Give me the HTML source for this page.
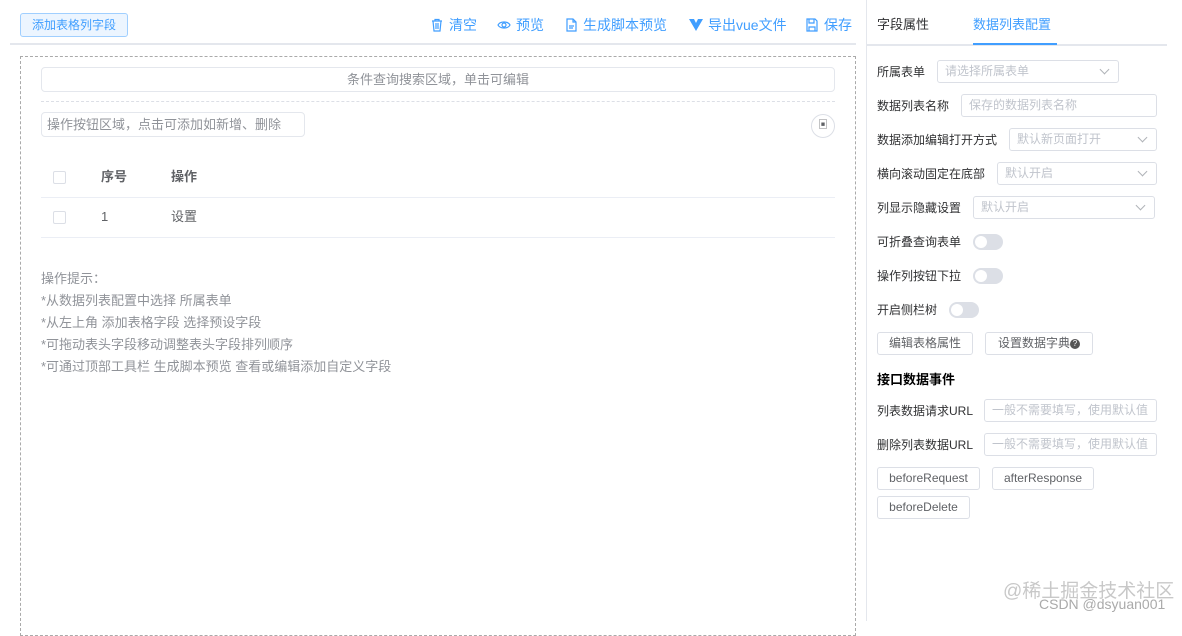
<!DOCTYPE html><html><head><meta charset="utf-8"><style>
*{box-sizing:border-box;margin:0;padding:0}
body{width:1182px;height:621px;background:#fff;font-family:"Liberation Sans","Noto Sans CJK SC",sans-serif;font-size:12px;color:#606266;position:relative;overflow:hidden}
.a{position:absolute;white-space:nowrap}
.lbl{position:absolute;left:877px;font-size:12px;color:#303133;line-height:22px;white-space:nowrap}
.inp{position:absolute;height:23px;border:1px solid #dcdfe6;border-radius:3px;color:#c0c4cc;font-size:12px;line-height:21px;padding-left:7px;white-space:nowrap}
.inp.sel::after{content:"";position:absolute;right:10px;top:5px;width:6px;height:6px;border-right:1px solid #b0b3b8;border-bottom:1px solid #b0b3b8;transform:rotate(45deg)}
.sw{position:absolute;width:30px;height:16px;border-radius:8px;background:#dcdfe6}
.sw::after{content:"";position:absolute;left:2px;top:2px;width:12px;height:12px;border-radius:6px;background:#fff}
.btn{position:absolute;height:23px;border:1px solid #dcdfe6;border-radius:3px;color:#606266;font-size:12px;line-height:21px;text-align:center;background:#fff}
.tb{position:absolute;top:15px;color:#409eff;font-size:14px;line-height:20px;white-space:nowrap;display:flex;align-items:center;gap:5px}
.tb svg{width:14px;height:14px}
.hint{position:absolute;left:41px;color:#909399;font-size:13px;line-height:22px}
</style></head><body>
<div class="a" style="left:20px;top:13px;width:108px;height:24px;border:1px solid #a0cfff;background:#ecf5ff;border-radius:3px;color:#409eff;font-size:12px;line-height:22px;text-align:center">添加表格列字段</div>
<div class="tb" style="left:430px"><svg viewBox="0 0 14 14" fill="none" stroke="#409eff" stroke-width="1.2"><path d="M2 3h10M5 3V1.5h4V3M3 3l1 10h6l1-10M6 5v6M8 5v6"/></svg>清空</div>
<div class="tb" style="left:497px"><svg viewBox="0 0 14 14" fill="none" stroke="#409eff" stroke-width="1.2"><path d="M1 7c2-4 10-4 12 0c-2 4-10 4-12 0z"/><circle cx="7" cy="7" r="2"/></svg>预览</div>
<div class="tb" style="left:564px"><svg viewBox="0 0 14 14" fill="none" stroke="#409eff" stroke-width="1.2"><path d="M3 1h6l3 3v9H3zM9 1v3h3M5 8h5M5 10h4"/></svg>生成脚本预览</div>
<div class="tb" style="left:689px"><svg viewBox="0 0 14 14"><path d="M0 1h5l2 4 2-4h5L7 13z" fill="#409eff"/></svg>导出vue文件</div>
<div class="tb" style="left:805px"><svg viewBox="0 0 14 14" fill="none" stroke="#409eff" stroke-width="1.2"><path d="M2 1h8l2 2v10H2zM4 1v4h5V1M4 13V9h6v4"/></svg>保存</div>
<div class="a" style="left:10px;top:43px;width:846px;height:2px;background:#e4e7ed"></div>
<div class="a" style="left:866px;top:0;width:1px;height:621px;background:#e4e7ed"></div>
<div class="a" style="left:20px;top:56px;width:836px;height:580px;border:1px dashed #aaa"></div>
<div class="a" style="left:41px;top:67px;width:794px;height:25px;border:1px solid #e4e7ed;border-radius:4px;text-align:center;line-height:23px;font-size:13px;color:#909399">条件查询搜索区域，单击可编辑</div>
<div class="a" style="left:41px;top:101px;width:794px;border-top:1px dashed #dcdfe6"></div>
<div class="a" style="left:41px;top:112px;width:264px;height:25px;border:1px solid #e4e7ed;border-radius:4px;line-height:23px;font-size:13px;color:#909399;padding-left:5px">操作按钮区域，点击可添加如新增、删除</div>
<div class="a" style="left:811px;top:114px;width:24px;height:24px;border:1px solid #dcdfe6;border-radius:12px;text-align:center;line-height:22px;font-size:10px;color:#606266">▣</div>
<div class="a" style="left:53px;top:171px;width:13px;height:13px;border:1px solid #dcdfe6;border-radius:2px"></div>
<div class="a" style="left:101px;top:168px;font-weight:bold;font-size:13px;color:#606266;line-height:18px">序号</div>
<div class="a" style="left:171px;top:168px;font-weight:bold;font-size:13px;color:#606266;line-height:18px">操作</div>
<div class="a" style="left:41px;top:197px;width:794px;height:1px;background:#ebeef5"></div>
<div class="a" style="left:53px;top:211px;width:13px;height:13px;border:1px solid #dcdfe6;border-radius:2px"></div>
<div class="a" style="left:101px;top:208px;font-size:13px;line-height:18px">1</div>
<div class="a" style="left:171px;top:208px;font-size:13px;line-height:18px">设置</div>
<div class="a" style="left:41px;top:237px;width:794px;height:1px;background:#ebeef5"></div>
<div class="hint" style="top:268px">操作提示：</div>
<div class="hint" style="top:290px">*从数据列表配置中选择 所属表单</div>
<div class="hint" style="top:312px">*从左上角 添加表格字段 选择预设字段</div>
<div class="hint" style="top:334px">*可拖动表头字段移动调整表头字段排列顺序</div>
<div class="hint" style="top:356px">*可通过顶部工具栏 生成脚本预览 查看或编辑添加自定义字段</div>
<div class="a" style="left:877px;top:16px;font-size:13px;color:#303133;line-height:18px">字段属性</div>
<div class="a" style="left:973px;top:16px;font-size:13px;color:#409eff;line-height:18px">数据列表配置</div>
<div class="a" style="left:867px;top:44px;width:300px;height:2px;background:#e4e7ed"></div>
<div class="a" style="left:973px;top:43px;width:84px;height:2px;background:#409eff"></div>
<div class="lbl" style="top:61px">所属表单</div><div class="inp sel" style="left:937px;top:60px;width:182px">请选择所属表单</div>
<div class="lbl" style="top:95px">数据列表名称</div><div class="inp" style="left:961px;top:94px;width:196px">保存的数据列表名称</div>
<div class="lbl" style="top:129px">数据添加编辑打开方式</div><div class="inp sel" style="left:1009px;top:128px;width:148px">默认新页面打开</div>
<div class="lbl" style="top:163px">横向滚动固定在底部</div><div class="inp sel" style="left:997px;top:162px;width:160px">默认开启</div>
<div class="lbl" style="top:197px">列显示隐藏设置</div><div class="inp sel" style="left:973px;top:196px;width:182px">默认开启</div>
<div class="lbl" style="top:231px">可折叠查询表单</div><div class="sw" style="left:973px;top:234px"></div>
<div class="lbl" style="top:265px">操作列按钮下拉</div><div class="sw" style="left:973px;top:268px"></div>
<div class="lbl" style="top:299px">开启侧栏树</div><div class="sw" style="left:949px;top:302px"></div>
<div class="btn" style="left:877px;top:332px;width:96px">编辑表格属性</div>
<div class="btn" style="left:985px;top:332px;width:108px">设置数据字典<span style="display:inline-block;width:10px;height:10px;border-radius:5px;background:#555;color:#fff;font-size:8px;line-height:10px;vertical-align:middle">?</span></div>
<div class="a" style="left:877px;top:371px;font-weight:bold;font-size:13px;color:#000;line-height:18px">接口数据事件</div>
<div class="lbl" style="top:400px">列表数据请求URL</div><div class="inp" style="left:984px;top:399px;width:173px">一般不需要填写，使用默认值</div>
<div class="lbl" style="top:434px">删除列表数据URL</div><div class="inp" style="left:984px;top:433px;width:173px">一般不需要填写，使用默认值</div>
<div class="btn" style="left:877px;top:467px;width:103px">beforeRequest</div>
<div class="btn" style="left:992px;top:467px;width:102px">afterResponse</div>
<div class="btn" style="left:877px;top:496px;width:93px">beforeDelete</div>
<div class="a" style="left:1003px;top:581px;font-size:19px;color:#c8c8c8;line-height:22px">@稀土掘金技术社区</div>
<div class="a" style="left:1039px;top:595px;font-size:14px;color:#aaa;line-height:18px">CSDN @dsyuan001</div>
</body></html>
